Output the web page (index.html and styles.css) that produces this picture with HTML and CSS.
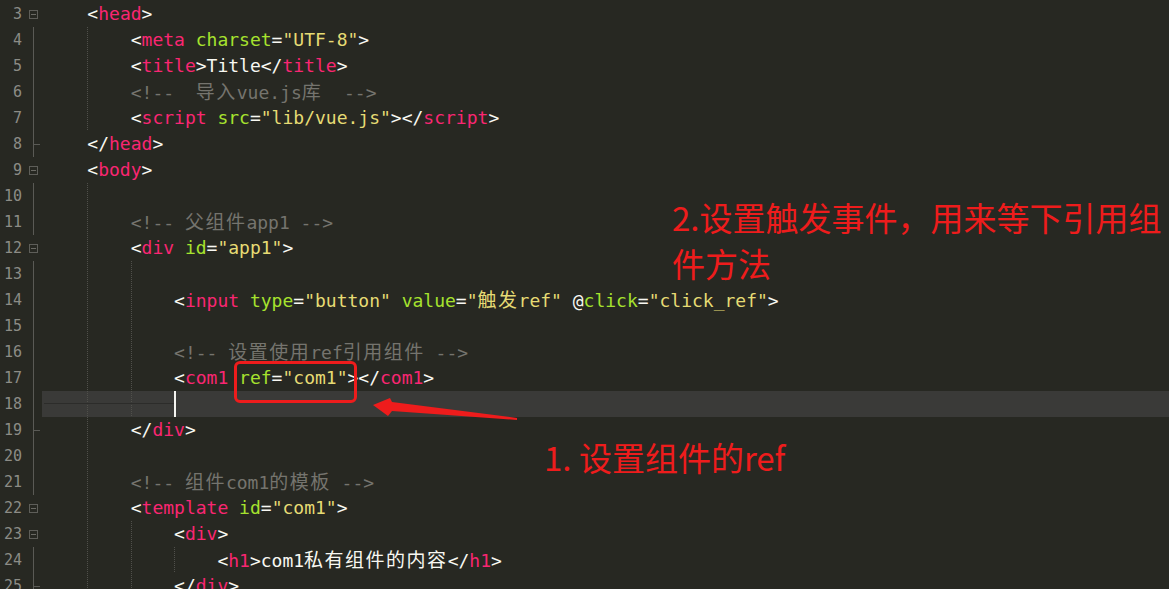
FILE: index.html
```html
<!DOCTYPE html>
<html lang="zh">
<head>
    <meta charset="UTF-8">
    <title>ref</title>
    <link rel="stylesheet" href="styles.css">
</head>
<body>
    <div class="editor">
        <div class="line"><span class="num">3</span><span class="fold"><span class="box"></span></span><span class="code">    <span class="p">&lt;</span><span class="t">head</span>&gt;</span></div>
        <div class="line"><span class="num">4</span><span class="fold mid"></span><span class="code g1">        &lt;<span class="t">meta</span> <span class="a">charset</span>=<span class="s">"UTF-8"</span>&gt;</span></div>
        <div class="line"><span class="num">5</span><span class="fold mid"></span><span class="code g1">        &lt;<span class="t">title</span>&gt;Title&lt;/<span class="t">title</span>&gt;</span></div>
        <div class="line"><span class="num">6</span><span class="fold mid"></span><span class="code g1">        <span class="c">&lt;!--  <span class="cjk">导入</span>vue.js<span class="cjk">库</span>  --&gt;</span></span></div>
        <div class="line"><span class="num">7</span><span class="fold mid"></span><span class="code g1">        &lt;<span class="t">script</span> <span class="a">src</span>=<span class="s">"lib/vue.js"</span>&gt;&lt;/<span class="t">script</span>&gt;</span></div>
        <div class="line"><span class="num">8</span><span class="fold end"></span><span class="code">    &lt;/<span class="t">head</span>&gt;</span></div>
        <div class="line"><span class="num">9</span><span class="fold"><span class="box"></span></span><span class="code">    &lt;<span class="t">body</span>&gt;</span></div>
        <div class="line"><span class="num">10</span><span class="fold mid"></span><span class="code g1"></span></div>
        <div class="line"><span class="num">11</span><span class="fold mid"></span><span class="code g1">        <span class="c">&lt;!-- <span class="cjk">父组件</span>app1 --&gt;</span></span></div>
        <div class="line"><span class="num">12</span><span class="fold"><span class="box"></span></span><span class="code g1">        &lt;<span class="t">div</span> <span class="a">id</span>=<span class="s">"app1"</span>&gt;</span></div>
        <div class="line"><span class="num">13</span><span class="fold mid"></span><span class="code g2"></span></div>
        <div class="line"><span class="num">14</span><span class="fold mid"></span><span class="code g2">            &lt;<span class="t">input</span> <span class="a">type</span>=<span class="s">"button"</span> <span class="a">value</span>=<span class="s">"<span class="cjk">触发</span>ref"</span> @<span class="a">click</span>=<span class="s">"click_ref"</span>&gt;</span></div>
        <div class="line"><span class="num">15</span><span class="fold mid"></span><span class="code g2"></span></div>
        <div class="line"><span class="num">16</span><span class="fold mid"></span><span class="code g2">            <span class="c">&lt;!-- <span class="cjk">设置使用</span>ref<span class="cjk">引用组件</span> --&gt;</span></span></div>
        <div class="line"><span class="num">17</span><span class="fold mid"></span><span class="code g2">            &lt;<span class="t">com1</span> <span class="a">ref</span>=<span class="s">"com1"</span>&gt;&lt;/<span class="t">com1</span>&gt;</span></div>
        <div class="line"><span class="num">18</span><span class="fold mid"></span><span class="code g2 cur"><span class="lead">            </span><span class="caret"></span></span></div>
        <div class="line"><span class="num">19</span><span class="fold end"></span><span class="code g1">        &lt;/<span class="t">div</span>&gt;</span></div>
        <div class="line"><span class="num">20</span><span class="fold mid"></span><span class="code g1"></span></div>
        <div class="line"><span class="num">21</span><span class="fold mid"></span><span class="code g1">        <span class="c">&lt;!-- <span class="cjk">组件</span>com1<span class="cjk">的模板</span> --&gt;</span></span></div>
        <div class="line"><span class="num">22</span><span class="fold"><span class="box"></span></span><span class="code g1">        &lt;<span class="t">template</span> <span class="a">id</span>=<span class="s">"com1"</span>&gt;</span></div>
        <div class="line"><span class="num">23</span><span class="fold"><span class="box"></span></span><span class="code g2">            &lt;<span class="t">div</span>&gt;</span></div>
        <div class="line"><span class="num">24</span><span class="fold mid"></span><span class="code g3">                &lt;<span class="t">h1</span>&gt;com1<span class="cjk">私有组件的内容</span>&lt;/<span class="t">h1</span>&gt;</span></div>
        <div class="line"><span class="num">25</span><span class="fold end"></span><span class="code g2">            &lt;/<span class="t">div</span>&gt;</span></div>
    </div>

    <div class="mark"></div>
    <svg class="arrow" width="150" height="28" viewBox="0 0 150 28">
        <polygon points="3,10 20,3 22,7 147,23 147,25 22,16 18,21" fill="#ee1c1c"/>
    </svg>
    <div class="note note-2">2.设置触发事件，用来等下引用组件方法</div>
    <div class="note note-1">1. 设置组件的ref</div>
</body>
</html>
```

FILE: styles.css
```css
body {
    margin: 0;
    height: 589px;
    overflow: hidden;
    background: #272822;
    font-family: "DejaVu Sans Mono", "Noto Sans CJK SC", monospace;
    color: #f8f8f2;
}

.editor {
    padding-top: 1px;
}

.line {
    display: flex;
    height: 26px;
    line-height: 26px;
}

.num {
    width: 22px;
    text-align: right;
    font-size: 15px;
    color: #8c8c86;
}

.fold {
    width: 20px;
    display: flex;
    align-items: center;
    padding-left: 7px;
    box-sizing: border-box;
}

.fold.mid {
    background: linear-gradient(#5a5a55, #5a5a55) 11px 0 / 1px 100% no-repeat;
}

.fold.end {
    background:
        linear-gradient(#5a5a55, #5a5a55) 11px 0 / 1px 100% no-repeat,
        linear-gradient(#5a5a55, #5a5a55) 11px 13px / 7px 1px no-repeat;
}

.box {
    width: 9px;
    height: 9px;
    box-sizing: border-box;
    border: 1px solid #5e5e59;
    background: linear-gradient(#6a6a64, #6a6a64) center / 5px 1px no-repeat;
}

.code {
    flex: 1;
    padding-left: 2px;
    white-space: pre;
    font-size: 18px;
    --dot: linear-gradient(#50504b 50%, transparent 50%);
    background-size: 1px 2px;
    background-repeat: repeat-y;
}

.g1 {
    background-image: var(--dot);
    background-position: calc(2px + 4ch) 0;
}

.g2 {
    background-image: var(--dot), var(--dot);
    background-position: calc(2px + 4ch) 0, calc(2px + 8ch) 0;
}

.g3 {
    background-image: var(--dot), var(--dot), var(--dot);
    background-position: calc(2px + 4ch) 0, calc(2px + 8ch) 0, calc(2px + 12ch) 0;
}

.cur {
    background-color: #3a3a38;
}

.lead {
    background: linear-gradient(#2c2c2a, #2c2c2a) 0 50% / 100% 1px no-repeat;
}

.caret {
    display: inline-block;
    width: 2px;
    height: 26px;
    vertical-align: top;
    background: #f4f4f0;
}

.cjk {
    font-size: 19px;
    letter-spacing: 1.5px;
}

.t { color: #f92672; }
.a { color: #a6e22e; }
.s { color: #e6db74; }
.c { color: #75746e; }

.mark {
    position: absolute;
    left: 234px;
    top: 361px;
    width: 123px;
    height: 42px;
    box-sizing: border-box;
    border: 3px solid #ee1c1c;
    border-radius: 6px;
}

.arrow {
    position: absolute;
    left: 370px;
    top: 395px;
}

.note {
    position: absolute;
    color: #ee1c1c;
    font-family: "Noto Sans CJK SC", sans-serif;
    font-size: 33px;
    line-height: 46px;
}

.note-2 {
    left: 672px;
    top: 194px;
    width: 505px;
}

.note-1 {
    left: 544px;
    top: 434px;
}
```
